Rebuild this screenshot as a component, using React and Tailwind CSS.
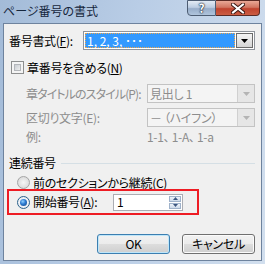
import React from "react";

function DownArrow({ color = "#000" }) {
  return (
    <svg width="7" height="4" viewBox="0 0 7 4">
      <path d="M0 0h7L3.5 4z" fill={color} />
    </svg>
  );
}

function DisabledSelect({ text }) {
  return (
    <div className="w-[108px] h-[19px] flex border border-[#c3c3c3] bg-[#f4f4f4]">
      <div className="flex-1 flex items-center pl-[2px] text-[#8d8d8d] whitespace-pre">{text}</div>
      <div className="w-[17px] h-full flex items-center justify-center border-l border-[#d0d0d0] bg-[#e6e6e6]">
        <DownArrow color="#b4b4b4" />
      </div>
    </div>
  );
}

function Radio({ checked }) {
  return (
    <div
      className={`w-[13px] h-[13px] rounded-full border flex items-center justify-center shrink-0 ${
        checked
          ? "border-[#2c628b] bg-[radial-gradient(circle,#ffffff_0%,#e0e6ee_100%)]"
          : "border-[#a5a5a5] bg-[radial-gradient(circle,#f6f6f6_0%,#d2d2d2_100%)]"
      }`}
    >
      {checked && (
        <div className="w-[7px] h-[7px] rounded-full bg-[radial-gradient(circle_at_40%_35%,#8fd0ff_0%,#2a78cf_45%,#17467f_100%)]" />
      )}
    </div>
  );
}

export default function App() {
  return (
    <div className="w-[265px] h-[264px] flex flex-col overflow-hidden bg-[linear-gradient(100deg,#a3bbd8_0%,#b9cde6_45%,#d2dfee_100%)] font-['Noto_Sans_CJK_JP',sans-serif] text-[12px] leading-none tracking-[-0.3px] text-black [font-feature-settings:'palt']">
      {/* Title bar */}
      <div className="h-[23px] shrink-0 flex items-start justify-between">
        <span className="pl-[3px] pt-[5px] tracking-normal text-[#15263c]">ページ番号の書式</span>
        <div className="flex mr-[5px] h-[16px]">
          <div className="w-[29px] h-full flex items-center justify-center rounded-bl-[4px] border border-[#4d5d73] bg-[linear-gradient(180deg,#e3ebf4_0%,#bccde2_45%,#97adc9_55%,#b0c5dd_100%)]">
            <span className="text-white font-bold text-[12px] [text-shadow:0_0_1px_#1d2b3d,0_0_1px_#1d2b3d,0_0_2px_#1d2b3d]">?</span>
          </div>
          <div className="w-[44px] h-full flex items-center justify-center rounded-br-[4px] border border-l-0 border-[#5a2a24] bg-[linear-gradient(180deg,#e9a896_0%,#d17561_45%,#c0432e_55%,#cb5d43_100%)]">
            <svg width="14" height="11" viewBox="0 0 14 11">
              <path d="M2 1.5l10 8M12 1.5l-10 8" stroke="#3b1712" strokeWidth="4" strokeLinecap="square" />
              <path d="M2 1.5l10 8M12 1.5l-10 8" stroke="#fff" strokeWidth="2" strokeLinecap="square" />
            </svg>
          </div>
        </div>
      </div>

      {/* Client area */}
      <div className="mx-[3px] mb-[3px] flex-1 flex flex-col border border-[#6e839e] bg-[#f0f0f0] pl-[5px] pr-[6px]">
        {/* 番号書式 */}
        <div className="mt-[7px] h-[19px] flex items-center">
          <div className="w-[74px]">
            番号書式(<span className="underline">F</span>):
          </div>
          <div className="w-[172px] h-full flex border border-[#8f949b] bg-white p-[1px]">
            <div className="flex-1 flex items-center pl-[2px] bg-[#3399ff] text-white tracking-normal whitespace-pre outline outline-1 outline-dotted outline-[#f0a64a] -outline-offset-1">
              1, 2, 3, ･･･
            </div>
            <div className="w-[17px] h-full ml-[1px] flex items-center justify-center border border-[#6b6b6b] bg-[linear-gradient(180deg,#f4f4f4_0%,#e6e6e6_50%,#d4d4d4_100%)]">
              <DownArrow />
            </div>
          </div>
        </div>

        {/* 章番号を含める */}
        <div className="mt-[11px] h-[13px] flex items-center gap-[3px] pl-[2px]">
          <div className="w-[13px] h-[13px] border border-[#8e8f8f] bg-[#f4f4f4] p-[2px]">
            <div className="w-full h-full border border-[#b3b6ba] bg-[linear-gradient(135deg,#c9cdd2_0%,#eeeeee_100%)]" />
          </div>
          <span>
            章番号を含める(<span className="underline">N</span>)
          </span>
        </div>

        {/* 章タイトルのスタイル */}
        <div className="mt-[10px] h-[19px] flex items-center pl-[17px] text-[#8d8d8d]">
          <div className="w-[121px] whitespace-nowrap tracking-[-0.9px]">章タイトルのスタイル(P):</div>
          <DisabledSelect text="見出し 1" />
        </div>

        {/* 区切り文字 */}
        <div className="mt-[5px] h-[19px] flex items-center pl-[17px] text-[#8d8d8d]">
          <div className="w-[121px] whitespace-nowrap">区切り文字(E):</div>
          <DisabledSelect text="－ （ハイフン）" />
        </div>

        {/* 例 */}
        <div className="mt-[3px] h-[14px] flex items-center pl-[17px] text-[#8d8d8d]">
          <div className="w-[121px]">例:</div>
          <span className="whitespace-pre">1-1、 1-A、 1-a</span>
        </div>

        {/* 連続番号 */}
        <div className="mt-[12px] h-[14px] flex items-center">
          <span>連続番号</span>
          <div className="flex-1 ml-[5px] h-px bg-[#d5dfe5]" />
        </div>

        <div className="mt-[6px] h-[13px] flex items-center gap-[3px] pl-[8px]">
          <Radio checked={false} />
          <span>前のセクションから継続(C)</span>
        </div>

        {/* 開始番号 (highlighted) */}
        <div className="-ml-[2px] w-[192px] h-[26px] flex items-center border-2 border-[#ee1c24] pl-[8px]">
          <Radio checked />
          <div className="ml-[3px] w-[80px]">
            開始番号(<span className="underline">A</span>):
          </div>
          <div className="w-[70px] h-[17px] flex border border-[#abadb3] bg-white">
            <div className="flex-1 flex items-center pl-[3px]">1</div>
            <div className="w-[14px] h-full flex flex-col p-[1px] gap-px">
              <div className="flex-1 flex items-center justify-center border border-[#9fb2ca] bg-[linear-gradient(180deg,#eef3f9_0%,#cddaea_100%)]">
                <svg width="5" height="3" viewBox="0 0 5 3"><path d="M0 3h5L2.5 0z" fill="#3c5680" /></svg>
              </div>
              <div className="flex-1 flex items-center justify-center border border-[#9fb2ca] bg-[linear-gradient(180deg,#eef3f9_0%,#cddaea_100%)]">
                <svg width="5" height="3" viewBox="0 0 5 3"><path d="M0 0h5L2.5 3z" fill="#3c5680" /></svg>
              </div>
            </div>
          </div>
        </div>

        {/* Buttons */}
        <div className="mt-[19px] flex justify-end gap-[12px]">
          <button className="w-[73px] h-[20px] rounded-[3px] border border-[#3c7fb1] shadow-[inset_0_0_0_1px_#bfe6f9] bg-[linear-gradient(180deg,#f2f2f2_0%,#ebebeb_50%,#dddddd_50%,#cfcfcf_100%)] text-[12px]">
            OK
          </button>
          <button className="w-[73px] h-[20px] rounded-[3px] border border-[#707070] shadow-[inset_0_0_0_1px_#fbfbfb] bg-[linear-gradient(180deg,#f2f2f2_0%,#ebebeb_50%,#dddddd_50%,#cfcfcf_100%)] text-[12px]">
            キャンセル
          </button>
        </div>
      </div>
    </div>
  );
}
